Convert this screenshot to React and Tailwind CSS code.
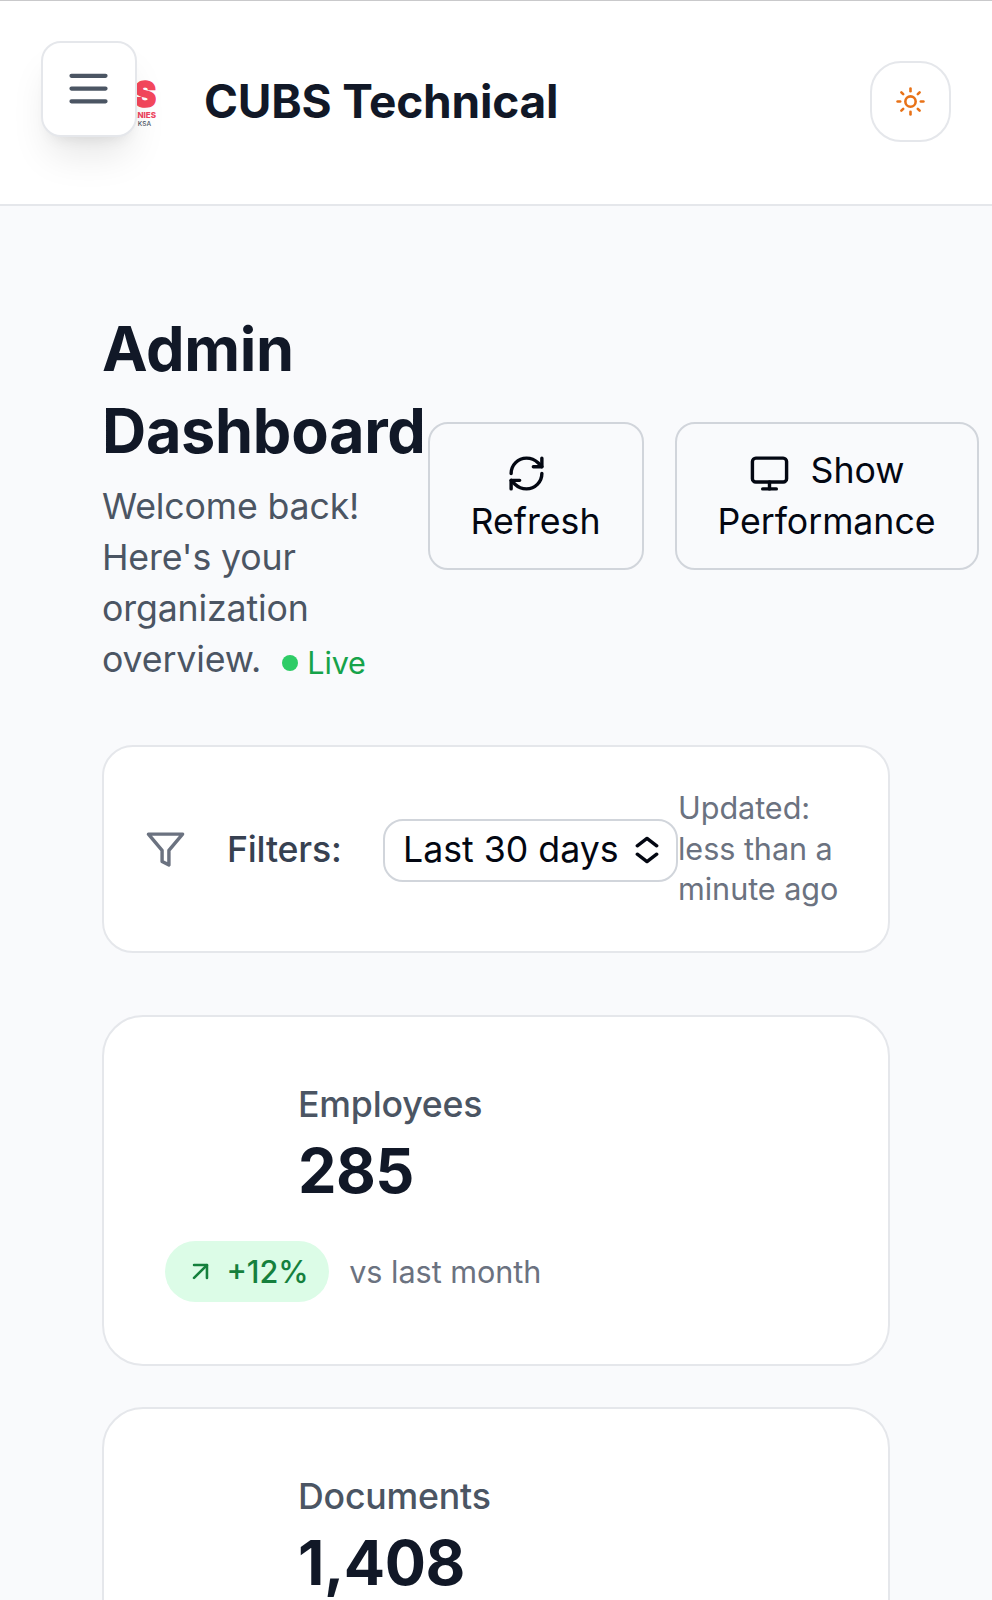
import { ArrowUpRight, Monitor, RefreshCw, Sun } from "lucide-react";

function MenuIcon() {
  return (
    <svg
      className="relative -left-[0.5px] -top-[0.5px] size-[51px] text-[#4b5563]"
      viewBox="0 0 24 24"
      fill="none"
      stroke="currentColor"
      strokeWidth="2"
      strokeLinecap="round"
    >
      <path d="M4 6h16M4 12h16M4 18h16" />
    </svg>
  );
}

function FunnelIcon() {
  return (
    <svg
      className="size-[41px] shrink-0 text-[#6b7280]"
      viewBox="0 0 24 24"
      fill="none"
      stroke="currentColor"
      strokeWidth="2"
      strokeLinecap="round"
      strokeLinejoin="round"
    >
      <polygon points="22 3 2 3 10 12.46 10 19 14 21 14 12.46 22 3" />
    </svg>
  );
}

function SelectArrows() {
  return (
    <svg
      className="h-[28px] w-[24px] shrink-0"
      viewBox="0 0 24 28"
      fill="none"
      stroke="currentColor"
      strokeWidth="3.4"
      strokeLinecap="round"
      strokeLinejoin="round"
    >
      <path d="M2.3 9.8 12 2.4l9.7 7.4M2.3 18.2l9.7 7.4 9.7-7.4" />
    </svg>
  );
}

function Header() {
  return (
    <header className="relative flex h-[206px] shrink-0 items-start justify-between border-t border-b-2 border-t-[#c9c9cb] border-b-[#e5e7eb] bg-white pr-[41px]">
      <div className="flex h-[202px] w-[156px] flex-col items-end pt-[75px] font-black leading-none text-[#f4475c]">
        <span className="h-[35px] origin-right scale-x-[0.92] text-[36px] leading-[37px] [-webkit-text-stroke:1.5px_#f4475c]">
          S
        </span>
        <span className="text-[8px] font-extrabold leading-[9px] text-[#ee4460]">ANIES</span>
        <span className="pr-[5px] text-[6.5px] font-medium leading-[8px] text-[#4b5563]">KSA</span>
      </div>
      <h2 className="ml-[48px] mt-[68px] flex-1 text-[46px] font-bold leading-[64px] tracking-[-0.2px] text-[#111827]">
        CUBS Technical
      </h2>
      <button className="mt-[60px] flex size-[81px] items-center justify-center rounded-[31px] border-2 border-[#e5e7eb] bg-white">
        <Sun className="size-[31px] text-[#e87217]" />
      </button>
      <button className="absolute left-[41px] top-[40px] flex size-[96px] items-center justify-center rounded-[20px] border-2 border-[#e5e7eb] bg-white shadow-[0_25px_38px_-8px_rgba(0,0,0,0.1),0_10px_15px_-10px_rgba(0,0,0,0.1)]">
        <MenuIcon />
      </button>
    </header>
  );
}

function StatCard({ label, value, trend }) {
  return (
    <section className="h-[351px] shrink-0 rounded-[41px] border-2 border-[#e5e7eb] bg-white p-[61px]">
      <div className="pl-[133px] pt-px">
        <p className="text-[35.7px] font-medium leading-[51px] tracking-[-0.2px] text-[#4b5563]">{label}</p>
        <p className="text-[61.2px] font-bold leading-[82px] tracking-[-0.5px] text-[#111827]">{value}</p>
      </div>
      <div className="mt-[29px] flex items-center gap-[20px]">
        <span className="flex h-[61px] items-center gap-[10px] rounded-full bg-[#dcfce7] px-[20.4px] text-[30.6px] font-medium text-[#15803d]">
          <ArrowUpRight className="size-[31px]" />
          {trend}
        </span>
        <span className="text-[30.6px] tracking-[-0.03px] text-[#6b7280]">vs last month</span>
      </div>
    </section>
  );
}

const stats = [
  { label: "Employees", value: "285", trend: "+12%" },
  { label: "Documents", value: "1,408", trend: "+8%" },
];

export default function App() {
  return (
    <div className="flex h-[1600px] w-[992px] flex-col overflow-hidden bg-[#f9fafc] font-['Inter',sans-serif]">
      <Header />
      <main className="flex flex-col px-[102px] pt-[103px]">
        <div className="flex h-[374px] shrink-0 items-center">
          <div className="w-[325.5px] shrink-0 self-start">
            <h1 className="text-[61.2px] font-bold leading-[81.6px] tracking-[-0.3px] text-[#111827]">
              Admin
              <br />
              Dashboard
            </h1>
            <p className="mt-[9px] whitespace-nowrap text-[35.7px] leading-[51px] tracking-[-0.15px] text-[#4b5563]">
              Welcome back!
              <br />
              Here's your
              <br />
              organization
              <br />
              overview.
              <span className="relative -top-[2px] ml-[21px] inline-flex items-center text-[30.6px] leading-[41px] text-[#16a34a]">
                <span className="relative top-px mr-[9px] size-[16px] rounded-full bg-[#2ecc66]" />
                Live
              </span>
            </p>
          </div>
          <div className="flex shrink-0 gap-[31px] text-[35.7px] leading-[51px] text-gray-950">
            <button className="h-[148px] w-[216px] rounded-[20px] border-2 border-[#d1d5db]">
              <RefreshCw className="mr-[18px] inline size-[41px] align-middle" />
              <br />
              Refresh
            </button>
            <button className="h-[148px] w-[304px] rounded-[20px] border-2 border-[#d1d5db] tracking-[-0.05px]">
              <Monitor className="mr-[21px] inline size-[41px] align-middle" />
              Show
              <br />
              Performance
            </button>
          </div>
        </div>

        <section className="mt-[62px] flex h-[208px] shrink-0 items-center rounded-[31px] border-2 border-[#e5e7eb] bg-white pl-[41px]">
          <FunnelIcon />
          <span className="ml-[41px] w-[115px] pt-[2px] text-[35.7px] font-medium tracking-[-0.2px] text-[#374151]">
            Filters:
          </span>
          <button className="relative top-px ml-[41px] flex h-[63px] w-[295px] shrink-0 items-center justify-between rounded-[20px] border-2 border-[#d1d5db] bg-white pl-[18px] pr-[17px] text-[35.7px] text-gray-950">
            Last 30 days
            <SelectArrows />
          </button>
          <p className="whitespace-nowrap text-[30.6px] leading-[40.8px] tracking-[-0.05px] text-[#6b7280]">
            Updated:
            <br />
            less than a
            <br />
            minute ago
          </p>
        </section>

        <div className="mt-[62px] flex flex-col gap-[41px]">
          {stats.map((stat) => (
            <StatCard key={stat.label} {...stat} />
          ))}
        </div>
      </main>
    </div>
  );
}
